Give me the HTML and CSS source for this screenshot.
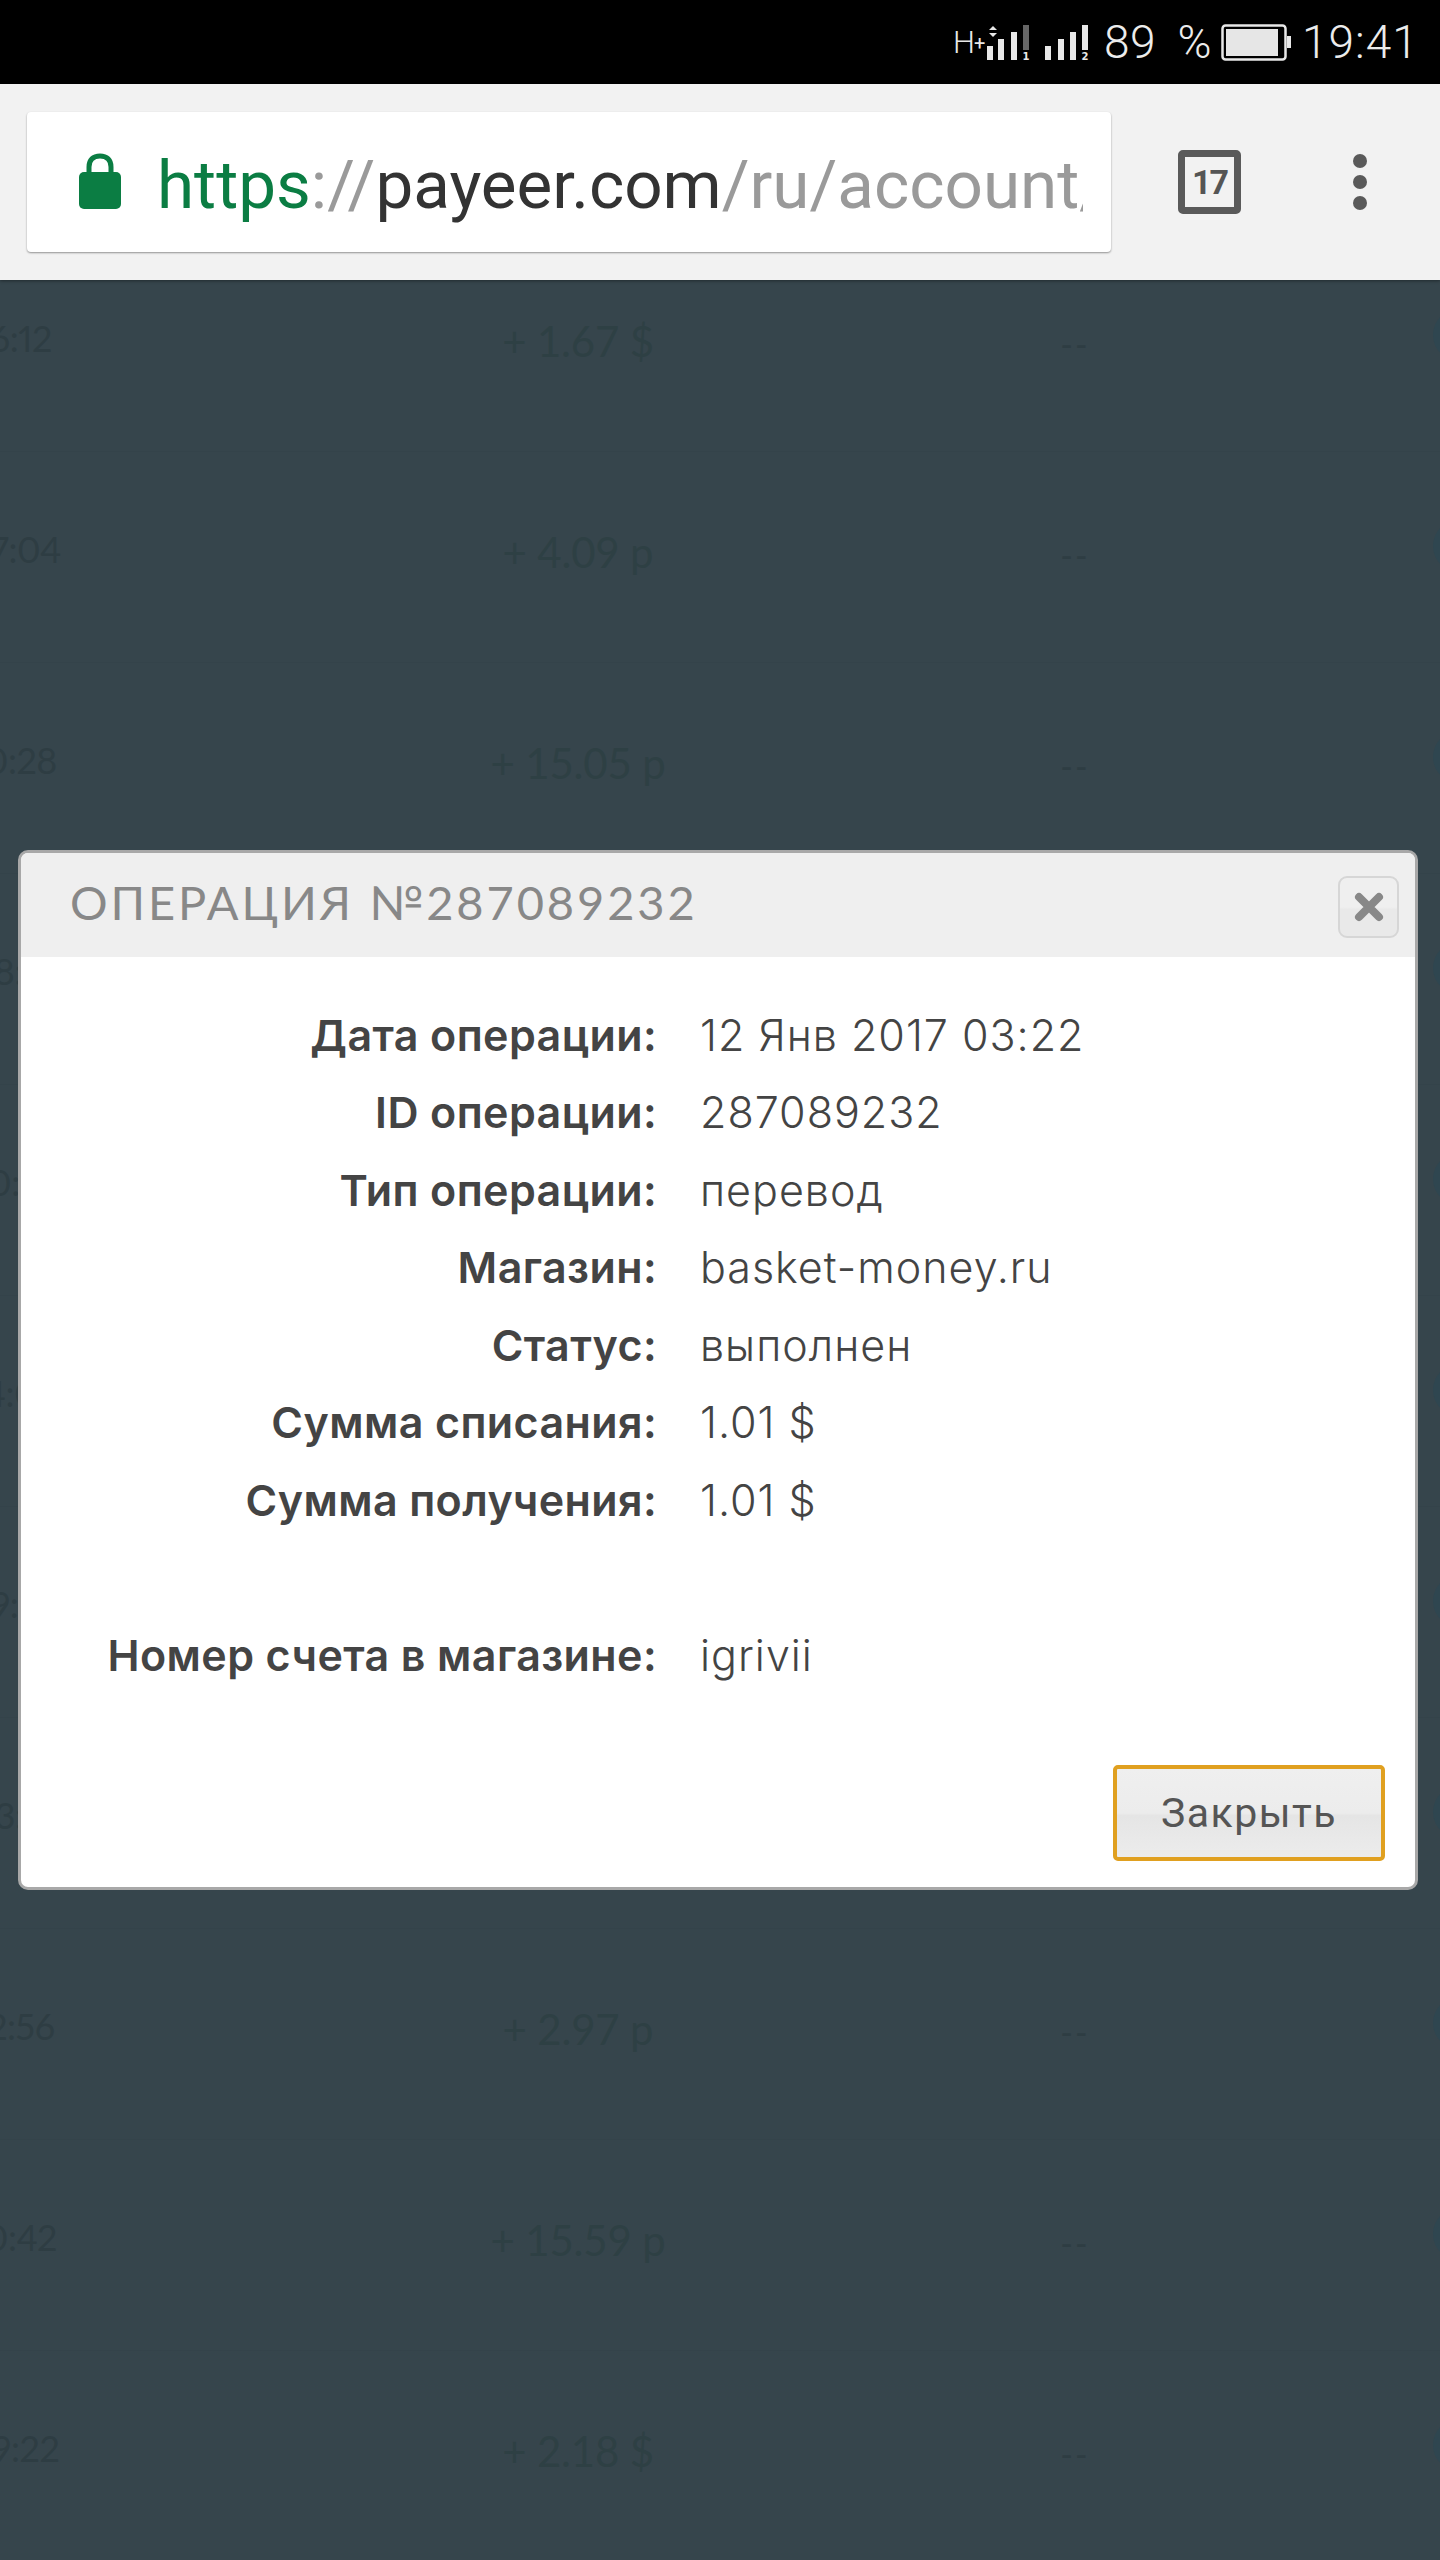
FILE: index.html
```html
<!DOCTYPE html>
<html lang="ru">
<head>
    <meta charset="UTF-8">
    <meta name="viewport" content="width=device-width, initial-scale=1.0">
    <title>Операция №287089232</title>
    <link rel="stylesheet" href="styles.css">
</head>
<body>

    <!-- Status bar -->
    <div class="status-bar">
        <svg class="signal-icons" width="144" height="50" viewBox="0 0 144 50">
            <text x="2" y="34" class="net-h">H</text>
            <text x="23" y="31" class="net-plus">+</text>
            <path d="M42 7 L46 11 H38 Z M38 14 H46 L42 18 Z" fill="#e8e8e8"/>
            <rect x="36" y="27" width="6" height="14" fill="#e8e8e8"/>
            <rect x="47" y="20" width="6" height="21" fill="#e8e8e8"/>
            <rect x="60" y="13" width="6" height="28" fill="#e8e8e8"/>
            <rect x="72" y="6" width="6" height="25" fill="#666"/>
            <text x="75" y="41" class="sim">1</text>
            <rect x="94" y="27" width="6" height="14" fill="#e8e8e8"/>
            <rect x="107" y="20" width="6" height="21" fill="#e8e8e8"/>
            <rect x="119" y="13" width="6" height="28" fill="#e8e8e8"/>
            <rect x="131" y="6" width="6" height="25" fill="#e8e8e8"/>
            <text x="134" y="41" class="sim">2</text>
        </svg>
        <span class="battery-text">89 %</span>
        <svg class="battery" width="72" height="38" viewBox="0 0 72 38">
            <rect x="1.5" y="1.5" width="63" height="34" rx="3" fill="none" stroke="#e8e8e8" stroke-width="2.5"/>
            <rect x="5" y="5" width="52" height="27" fill="#e6e6e6"/>
            <rect x="66" y="12" width="4" height="12" fill="#e8e8e8"/>
        </svg>
        <span class="clock">19:41</span>
    </div>

    <!-- Browser toolbar -->
    <div class="toolbar">
        <div class="url-box">
            <svg class="lock" width="42" height="56" viewBox="0 0 42 56">
                <path d="M10 20 V14 C10 7 14 3 21 3 C28 3 32 7 32 14 V20" fill="none" stroke="#0b7d43" stroke-width="5"/>
                <rect x="0" y="19" width="42" height="37" rx="5" fill="#0b7d43"/>
            </svg>
            <div class="url-text"><span class="url-scheme">https</span>://<span class="url-host">payeer.com</span>/ru/account/history/</div>
        </div>
        <div class="tab-count">17</div>
        <div class="menu-dots"><i></i><i></i><i></i></div>
    </div>

    <!-- Page behind the dialog -->
    <div class="page">
        <div class="history">
            <div class="history-row"><span class="time">16:12</span><span class="amount">+ 1.67 $</span><span class="dash">--</span><span class="dot"></span></div>
            <div class="history-row"><span class="time">07:04</span><span class="amount">+ 4.09 р</span><span class="dash">--</span><span class="dot"></span></div>
            <div class="history-row"><span class="time">10:28</span><span class="amount">+ 15.05 р</span><span class="dash">--</span><span class="dot"></span></div>
            <div class="history-row"><span class="time">08:18</span><span class="amount">+ 3.40 р</span><span class="dash">--</span><span class="dot"></span></div>
            <div class="history-row"><span class="time">00:30</span><span class="amount">+ 2.11 р</span><span class="dash">--</span><span class="dot"></span></div>
            <div class="history-row"><span class="time">14:06</span><span class="amount">+ 5.20 р</span><span class="dash">--</span><span class="dot"></span></div>
            <div class="history-row"><span class="time">09:50</span><span class="amount">+ 1.90 $</span><span class="dash">--</span><span class="dot"></span></div>
            <div class="history-row"><span class="time">03:15</span><span class="amount">+ 7.33 р</span><span class="dash">--</span><span class="dot"></span></div>
            <div class="history-row"><span class="time">12:56</span><span class="amount">+ 2.97 р</span><span class="dash">--</span><span class="dot"></span></div>
            <div class="history-row"><span class="time">10:42</span><span class="amount">+ 15.59 р</span><span class="dash">--</span><span class="dot"></span></div>
            <div class="history-row"><span class="time">09:22</span><span class="amount">+ 2.18 $</span><span class="dash">--</span><span class="dot"></span></div>
        </div>
    </div>

    <!-- Operation dialog -->
    <div class="dialog">
        <div class="dialog-head">
            <h2 class="dialog-title">ОПЕРАЦИЯ №287089232</h2>
            <div class="close-btn">
                <svg width="30" height="30" viewBox="0 0 30 30">
                    <path d="M5 5 L25 25 M25 5 L5 25" stroke="#888" stroke-width="8" stroke-linecap="round"/>
                </svg>
            </div>
        </div>
        <div class="details">
            <div class="label">Дата операции:</div><div class="value">12 Янв 2017 03:22</div>
            <div class="label">ID операции:</div><div class="value">287089232</div>
            <div class="label">Тип операции:</div><div class="value">перевод</div>
            <div class="label">Магазин:</div><div class="value">basket-money.ru</div>
            <div class="label">Статус:</div><div class="value">выполнен</div>
            <div class="label">Сумма списания:</div><div class="value">1.01 $</div>
            <div class="label">Сумма получения:</div><div class="value">1.01 $</div>
            <div class="label"></div><div class="value"></div>
            <div class="label">Номер счета в магазине:</div><div class="value">igrivii</div>
        </div>
        <div class="dialog-foot">
            <button class="close-text-btn" type="button">Закрыть</button>
        </div>
    </div>

</body>
</html>
```

FILE: styles.css
```css
* {
    box-sizing: border-box;
}
html, body {
    margin: 0;
    padding: 0;
}
body {
    position: relative;
    width: 1440px;
    height: 2560px;
    overflow: hidden;
    font-family: Roboto, "Liberation Sans", sans-serif;
    background-color: #36454c;
}

/* Status bar */
.status-bar {
    height: 84px;
    background: #000;
    color: #ececec;
    display: flex;
    align-items: center;
    padding-left: 951px;
    font-weight: 300;
}
.signal-icons {
    margin-top: 3px;
    flex: none;
}
.net-h {
    font: 300 31px Roboto, sans-serif;
    fill: #e8e8e8;
}
.net-plus {
    font: 400 20px Roboto, sans-serif;
    fill: #e8e8e8;
}
.sim {
    font: 700 10px "DejaVu Sans", sans-serif;
    fill: #e8e8e8;
    text-anchor: middle;
}
.battery-text {
    font-size: 46px;
    margin-left: 9px;
    width: 117px;
    flex: none;
    word-spacing: 10px;
    letter-spacing: 0.4px;
}
.battery {
    flex: none;
    margin-top: 2px;
}
.clock {
    font-size: 46px;
    margin-left: 9px;
    letter-spacing: 1px;
}

/* Browser toolbar */
.toolbar {
    height: 196px;
    background: #f2f2f2;
    display: flex;
    align-items: center;
    padding-left: 27px;
    position: relative;
    z-index: 1;
    box-shadow: 0 1px 3px rgba(0, 0, 0, 0.4);
}
.url-box {
    width: 1084px;
    height: 140px;
    background: #fff;
    border-radius: 4px;
    box-shadow: 0 1px 2px rgba(0, 0, 0, 0.4);
    display: flex;
    align-items: center;
    padding-left: 52px;
    overflow: hidden;
}
.lock {
    flex: none;
    margin-top: -3px;
}
.url-text {
    margin-left: 36px;
    margin-top: 4px;
    width: 926px;
    overflow: hidden;
    white-space: nowrap;
    font-size: 67.4px;
    color: #9a9a9a;
}
.url-scheme {
    color: #0b7d43;
}
.url-host {
    color: #333;
}
.tab-count {
    margin-left: 67px;
    width: 63px;
    height: 64px;
    border: 7px solid #5a5a5a;
    border-radius: 5px;
    color: #555;
    font-size: 34px;
    letter-spacing: -2px;
    font-weight: 700;
    display: flex;
    align-items: center;
    justify-content: center;
}
.menu-dots {
    margin-left: 112px;
    display: flex;
    flex-direction: column;
    gap: 7px;
}
.menu-dots i {
    display: block;
    width: 14px;
    height: 14px;
    border-radius: 50%;
    background: #5a5a5a;
}

/* History behind overlay */
.page {
    height: 2280px;
    overflow: hidden;
    background: #36454c;
    font-family: Lato, sans-serif;
}
.history {
    margin-top: -39px;
}
.history-row {
    height: 211px;
    border-bottom: 1px solid #34434a;
    display: flex;
    align-items: center;
    position: relative;
}
.time {
    width: 120px;
    margin-left: -46px;
    margin-top: -16px;
    flex: none;
    text-align: center;
    font-size: 36px;
    font-variant-numeric: proportional-nums;
    letter-spacing: -0.5px;
    color: #2e3d43;
}
.amount {
    width: 300px;
    margin-left: 354px;
    margin-top: -10px;
    flex: none;
    text-align: center;
    font-size: 42px;
    letter-spacing: -0.2px;
    color: #2e4044;
}
.dash {
    width: 60px;
    margin-left: 317px;
    margin-top: -6px;
    flex: none;
    text-align: center;
    font-size: 34px;
    letter-spacing: 2px;
    color: #2e3d43;
}
.dot {
    position: absolute;
    right: -45px;
    top: 68px;
    width: 52px;
    height: 52px;
    border-radius: 50%;
    background: #2f4650;
}

/* Dialog */
.dialog {
    position: absolute;
    left: 18px;
    top: 850px;
    width: 1400px;
    height: 1040px;
    background: #fff;
    border: 3px solid #a8a8a8;
    border-radius: 10px;
    overflow: hidden;
    font-family: Inter, "Noto Sans", sans-serif;
}
.dialog-head {
    height: 104px;
    background: #efefef;
    display: flex;
    align-items: center;
    justify-content: space-between;
    padding: 0 16px 0 49px;
}
.dialog-title {
    margin: 0 0 6px;
    font-family: Lato, sans-serif;
    font-weight: 400;
    font-size: 47px;
    letter-spacing: 2.9px;
    color: #888;
}
.close-btn {
    width: 61px;
    height: 62px;
    margin-top: 4px;
    border: 2px solid #d6d6d6;
    border-radius: 9px;
    background: linear-gradient(#efefef 50%, #e9e9e9 54%);
    display: flex;
    align-items: center;
    justify-content: center;
}
.details {
    display: grid;
    grid-template-columns: 636px 1fr;
    grid-auto-rows: 77.5px;
    column-gap: 43px;
    align-items: center;
    padding-top: 39px;
    font-size: 43px;
    color: #444;
}
.label {
    text-align: right;
    font-weight: 600;
    letter-spacing: 0.4px;
}
.value {
    font-weight: 300;
    letter-spacing: 1px;
}
.dialog-foot {
    display: flex;
    justify-content: flex-end;
    padding: 71px 30px 0 0;
}
.close-text-btn {
    width: 272px;
    height: 96px;
    border: 4px solid #e0a020;
    border-radius: 5px;
    background: linear-gradient(#efefef, #ececec 50%, #e5e5e5 53%, #ececec);
    font-family: Roboto, sans-serif;
    font-size: 41px;
    letter-spacing: 1.5px;
    color: #555;
}
```
